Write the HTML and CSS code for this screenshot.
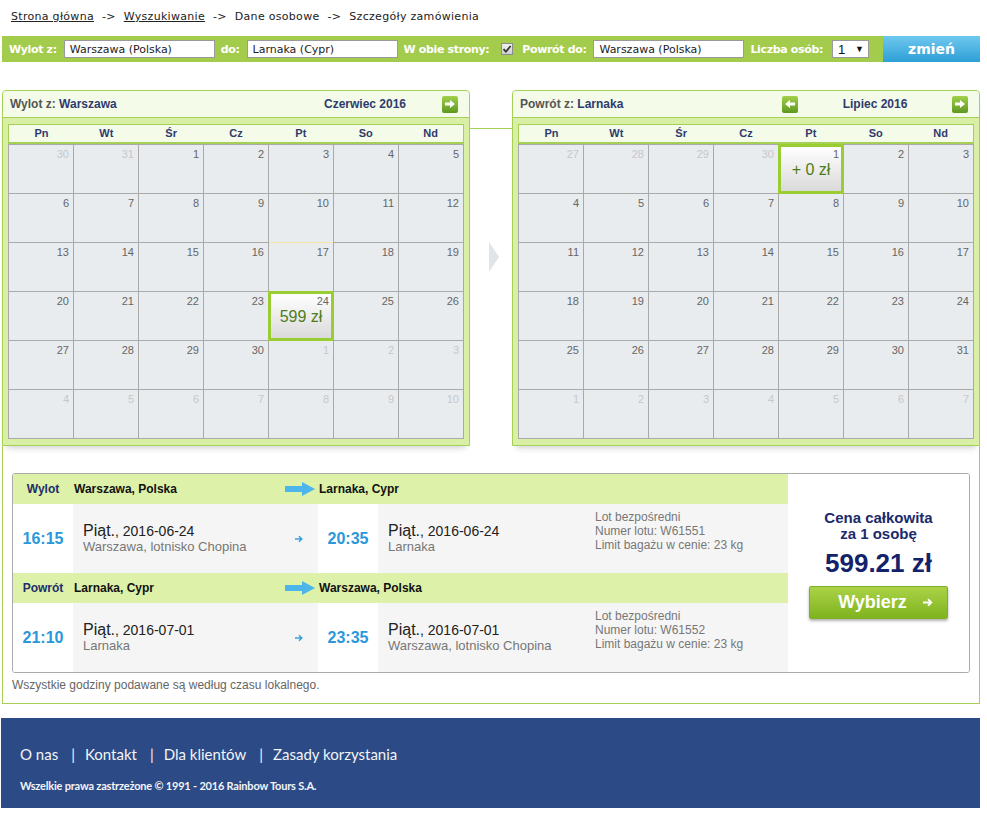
FILE: index.html
```html
<!DOCTYPE html>
<html lang="pl">
<head>
    <meta charset="UTF-8">
    <meta name="viewport" content="width=device-width, initial-scale=1.0">
    <title>Szczegóły zamówienia</title>
    <link rel="stylesheet" href="styles.css">
</head>
<body>
<div class="page">

    <div class="crumbs">
        <a href="#">Strona główna</a><span class="arr">-&gt;</span><a href="#">Wyszukiwanie</a><span class="arr">-&gt;</span>Dane osobowe<span class="arr">-&gt;</span>Szczegóły zamówienia
    </div>

    <form class="search" onsubmit="return false">
        <label>Wylot z:</label>
        <input type="text" value="Warszawa (Polska)">
        <label>do:</label>
        <input type="text" value="Larnaka (Cypr)">
        <label>W obie strony:</label>
        <span class="tick"><svg width="10" height="10" viewBox="0 0 10 10"><path d="M1.5 5.2l2.4 2.5L8.6 2" fill="none" stroke="#333" stroke-width="1.8"/></svg></span>
        <label>Powrót do:</label>
        <input type="text" value="Warszawa (Polska)">
        <label>Liczba osób:</label>
        <div class="count"><span>1</span><span class="caret">&#9660;</span></div>
        <button class="change">zmień</button>
    </form>

    <div class="calendars">
        <div class="cal">
            <div class="cal-head">
                <div class="cal-title">Wylot z: <span>Warszawa</span></div>
                <div class="nav">
                    <span class="btn-arr off"></span>
                    <span class="month">Czerwiec 2016</span>
                    <span class="btn-arr"><svg width="10" height="8" viewBox="0 0 10 8"><path d="M0 2.6h5V0l5 4-5 4V5.4H0z" fill="#fff"/></svg></span>
                </div>
            </div>
            <div class="cal-body">
                <div class="cal-days"><span>Pn</span><span>Wt</span><span>Śr</span><span>Cz</span><span>Pt</span><span>So</span><span>Nd</span></div>
                <div class="cal-grid" id="june"></div>
            </div>
        </div>

        <div class="cal-link">
            <div class="line"></div>
            <span class="tri"></span>
        </div>

        <div class="cal">
            <div class="cal-head">
                <div class="cal-title">Powrót z: <span>Larnaka</span></div>
                <div class="nav">
                    <span class="btn-arr"><svg width="10" height="8" viewBox="0 0 10 8"><path d="M10 2.6H5V0L0 4l5 4V5.4h5z" fill="#fff"/></svg></span>
                    <span class="month">Lipiec 2016</span>
                    <span class="btn-arr"><svg width="10" height="8" viewBox="0 0 10 8"><path d="M0 2.6h5V0l5 4-5 4V5.4H0z" fill="#fff"/></svg></span>
                </div>
            </div>
            <div class="cal-body">
                <div class="cal-days"><span>Pn</span><span>Wt</span><span>Śr</span><span>Cz</span><span>Pt</span><span>So</span><span>Nd</span></div>
                <div class="cal-grid" id="july"></div>
            </div>
        </div>
    </div>

    <div class="results">
        <div class="offer">
            <div class="legs">
                <div class="leg-head">
                    <span class="label">Wylot</span>
                    <span class="from">Warszawa, Polska
                        <svg width="30" height="14" viewBox="0 0 30 14"><path d="M0 4h17V0l13 7-13 7v-4H0z" fill="#4cb5ea"/></svg>
                    </span>
                    <span class="to">Larnaka, Cypr</span>
                </div>
                <div class="leg-row">
                    <div class="time">16:15</div>
                    <div class="stop dep">
                        <div>
                            <div class="when"><b>Piąt.</b>, 2016-06-24</div>
                            <div class="place">Warszawa, lotnisko Chopina</div>
                        </div>
                        <svg width="8" height="8" viewBox="0 0 8 8"><path d="M0 4h6.6M4 1.2L6.8 4 4 6.8" fill="none" stroke="#3aa0dd" stroke-width="1.5"/></svg>
                    </div>
                    <div class="time">20:35</div>
                    <div class="stop ret">
                        <div class="where">
                            <div class="when"><b>Piąt.</b>, 2016-06-24</div>
                            <div class="place">Larnaka</div>
                        </div>
                        <div class="info">Lot bezpośredni<br>Numer lotu: W61551<br>Limit bagażu w cenie: 23 kg</div>
                    </div>
                </div>

                <div class="leg-head">
                    <span class="label">Powrót</span>
                    <span class="from">Larnaka, Cypr
                        <svg width="30" height="14" viewBox="0 0 30 14"><path d="M0 4h17V0l13 7-13 7v-4H0z" fill="#4cb5ea"/></svg>
                    </span>
                    <span class="to">Warszawa, Polska</span>
                </div>
                <div class="leg-row">
                    <div class="time">21:10</div>
                    <div class="stop dep">
                        <div>
                            <div class="when"><b>Piąt.</b>, 2016-07-01</div>
                            <div class="place">Larnaka</div>
                        </div>
                        <svg width="8" height="8" viewBox="0 0 8 8"><path d="M0 4h6.6M4 1.2L6.8 4 4 6.8" fill="none" stroke="#3aa0dd" stroke-width="1.5"/></svg>
                    </div>
                    <div class="time">23:35</div>
                    <div class="stop ret">
                        <div class="where">
                            <div class="when"><b>Piąt.</b>, 2016-07-01</div>
                            <div class="place">Warszawa, lotnisko Chopina</div>
                        </div>
                        <div class="info">Lot bezpośredni<br>Numer lotu: W61552<br>Limit bagażu w cenie: 23 kg</div>
                    </div>
                </div>
            </div>

            <div class="price">
                <div class="total">Cena całkowita<br>za 1 osobę</div>
                <div class="amount">599.21 zł</div>
                <a href="#" class="choose">Wybierz
                    <svg width="10" height="9" viewBox="0 0 10 9"><path d="M0 4.5h8M5 1.2l3.3 3.3L5 7.8" fill="none" stroke="#fff" stroke-width="1.8"/></svg>
                </a>
            </div>
        </div>
        <p class="note">Wszystkie godziny podawane są według czasu lokalnego.</p>
    </div>

    <div class="footer">
        <div class="foot-links">
            <a href="#">O nas</a><span class="bar">|</span><a href="#">Kontakt</a><span class="bar">|</span><a href="#">Dla klientów</a><span class="bar">|</span><a href="#">Zasady korzystania</a>
        </div>
        <div class="copy">Wszelkie prawa zastrzeżone © 1991 - 2016 Rainbow Tours S.A.</div>
    </div>

</div>

<script>
    // rysuje siatke miesiaca: 6 tygodni po 7 dni
    function buildMonth(id, first, days, prevDays, prices, marked){
        var grid = document.getElementById(id);
        var html = "";

        for(var i = 0; i < 42; i++){
            var d = i - first + 1;
            var cls = "day";
            var num = d;

            if(d < 1){
                num = prevDays + d;
                cls += " out";
            }else if(d > days){
                num = d - days;
                cls += " out";
            }else{
                if(prices[d]) cls += " sel";
                if(d === marked) cls += " mark";
            }

            html += '<div class="' + cls + '"><span class="num">' + num + '</span>';
            if(d >= 1 && d <= days && prices[d]){
                html += '<span class="cost">' + prices[d] + '</span>';
            }
            html += '</div>';
        }
        grid.innerHTML = html;
    }

    buildMonth("june", 2, 30, 31, {24: "599 zł"}, 17);
    buildMonth("july", 4, 31, 30, {1: "+ 0 zł"}, null);
</script>
</body>
</html>
```

FILE: styles.css
```css
* {
    margin: 0;
    padding: 0;
    box-sizing: border-box;
}
body {
    font-family: "Liberation Sans", Arial, sans-serif;
    color: #222;
    background: #fff;
}
a {
    color: inherit;
}
.page {
    width: 978px;
    margin-left: 2px;
}

/* okruszki */
.crumbs {
    height: 36px;
    padding: 10px 9px 0;
    font: 11px/13px "DejaVu Sans", Verdana, sans-serif;
    letter-spacing: 0.3px;
    color: #222;
}
.crumbs .arr {
    margin: 0 8px;
}

/* pasek wyszukiwania */
.search {
    display: flex;
    align-items: center;
    height: 26px;
    padding-left: 7px;
    background: #a4cc4c;
    color: #fff;
    font: bold 11px "DejaVu Sans", Verdana, sans-serif;
    white-space: nowrap;
}
.search > * {
    flex-shrink: 0;
}
.search label {
    margin-right: 7px;
    letter-spacing: -0.35px;
}
.search input[type=text] {
    width: 151px;
    height: 18px;
    margin-right: 6px;
    padding: 0 5px;
    border: 1px solid #9a9a9a;
    font: 11px "DejaVu Sans", Verdana, sans-serif;
    color: #222;
}
.tick {
    display: flex;
    align-items: center;
    justify-content: center;
    width: 12px;
    height: 12px;
    margin: 0 9px 0 5px;
    border: 1px solid #8c8c8c;
    background: linear-gradient(#f0f0f0, #cfcfcf);
}
.count {
    display: flex;
    align-items: center;
    justify-content: space-between;
    width: 37px;
    height: 18px;
    margin-left: 2px;
    padding: 0 4px 0 5px;
    background: #fff;
    border: 1px solid #9a9a9a;
    color: #111;
    font: 13px "Liberation Sans", Arial, sans-serif;
}
.count .caret {
    font-size: 9px;
}
.change {
    margin-left: auto;
    width: 97px;
    height: 26px;
    border: 0;
    background: linear-gradient(#6fc8ee, #2e9fd7);
    color: #fff;
    font: bold 14px "DejaVu Sans", Verdana, sans-serif;
    cursor: pointer;
}

/* kalendarze */
.calendars {
    display: flex;
    margin-top: 28px;
}
.cal {
    width: 468px;
    border: 1px solid #a6cf55;
    border-radius: 4px 4px 0 0;
    background: #daefa6;
    box-shadow: 0 6px 6px -4px rgba(0,0,0,0.18);
}
.cal-head {
    display: flex;
    align-items: center;
    justify-content: space-between;
    height: 27px;
    padding: 0 11px 0 7px;
    background: #f4fbe8;
    border-bottom: 1px solid #a6cf55;
    border-radius: 3px 3px 0 0;
    font-size: 12px;
    font-weight: bold;
}
.cal-title {
    color: #555;
}
.cal-title span,
.nav .month {
    color: #2f3a6e;
}
.nav {
    display: flex;
    align-items: center;
    width: 186px;
}
.nav .month {
    flex: 1;
    text-align: center;
}
.btn-arr {
    display: flex;
    align-items: center;
    justify-content: center;
    width: 16px;
    height: 17px;
    border-radius: 2px;
    background: linear-gradient(#a2d04a, #5e9820);
    cursor: pointer;
}
.btn-arr.off {
    visibility: hidden;
}
.cal-body {
    padding: 6px 5px 6px;
}
.cal-days {
    display: grid;
    grid-template-columns: repeat(7, 1fr);
    height: 20px;
    border: 1px solid #a6cf55;
    border-bottom-width: 2px;
    background: #f4fbe8;
    color: #2f3a6e;
    font-size: 11px;
    font-weight: bold;
    line-height: 17px;
    text-align: center;
}
.cal-grid {
    display: grid;
    grid-template-columns: repeat(7, 64px);
    grid-auto-rows: 48px;
    gap: 1px;
    background: #a9a9a9;
    border: 1px solid #a9a9a9;
}
.day {
    padding: 3px 4px 0;
    background: #e9ecef;
    color: #666;
    font-size: 11px;
    line-height: 13px;
    text-align: right;
}
.day .num {
    display: block;
}
.day.out {
    color: #c5c8cc;
}
.day.mark {
    box-shadow: 0 -1px 0 #f3e6a2;
}
.day.sel {
    position: relative;
    margin: -1px;
    padding: 1px 2px 0;
    border: 3px solid #9acd32;
    background: linear-gradient(#fff, #dadada);
    cursor: pointer;
}
.day .cost {
    display: block;
    margin-top: 0;
    color: #4d7d1c;
    font-size: 16px;
    line-height: 18px;
    text-align: center;
}
.cal-link {
    flex: 0 0 42px;
    padding-top: 38px;
}
.cal-link .line {
    border-top: 1px solid #a6cf55;
}
.cal-link .tri {
    display: block;
    width: 0;
    margin: 113px 0 0 19px;
    border-left: 10px solid #e1e4e8;
    border-top: 15px solid transparent;
    border-bottom: 15px solid transparent;
}

/* wynik */
.results {
    padding: 27px 9px 11px;
    border: 1px solid #a6cf55;
    border-top: 0;
}
.offer {
    display: flex;
    height: 200px;
    border: 1px solid #aaa;
    border-radius: 3px;
    overflow: hidden;
}
.legs {
    width: 775px;
}
.leg-head {
    display: flex;
    align-items: center;
    height: 30px;
    background: #ddf1a8;
    color: #111;
    font-size: 12px;
    font-weight: bold;
}
.leg-head .label {
    width: 60px;
    color: #1f2d6b;
    text-align: center;
}
.leg-head .from {
    display: flex;
    align-items: center;
    justify-content: space-between;
    width: 245px;
    padding: 0 3px 0 1px;
}
.leg-head .to {
    padding-left: 1px;
}
.leg-row {
    display: flex;
    height: 69px;
}
.leg-row .time {
    display: flex;
    align-items: center;
    justify-content: center;
    width: 60px;
    background: #fff;
    color: #2a98da;
    font-size: 16px;
    font-weight: bold;
}
.stop {
    display: flex;
    align-items: center;
    padding: 0 10px;
    background: #f5f5f5;
}
.stop.dep {
    width: 245px;
    justify-content: space-between;
    padding-right: 15px;
}
.stop.ret {
    flex: 1;
}
.stop .where {
    width: 207px;
}
.when {
    color: #222;
    font-size: 14px;
    line-height: 16px;
}
.when b {
    font-size: 16px;
    font-weight: normal;
}
.place {
    color: #777;
    font-size: 13px;
    line-height: 15px;
}
.info {
    align-self: flex-start;
    margin-top: 6px;
    color: #777;
    font-size: 12px;
    line-height: 14px;
}
.price {
    flex: 1;
    display: flex;
    flex-direction: column;
    align-items: center;
    padding-top: 36px;
    background: #fff;
}
.total {
    color: #1a2a6c;
    font-size: 15px;
    font-weight: bold;
    line-height: 16px;
    text-align: center;
}
.amount {
    margin-top: 6px;
    color: #13236b;
    font-size: 26px;
    font-weight: bold;
    line-height: 30px;
}
.choose {
    display: flex;
    align-items: center;
    justify-content: center;
    gap: 16px;
    width: 139px;
    height: 33px;
    margin-top: 8px;
    padding-left: 14px;
    border: 1px solid #80ad2a;
    border-radius: 2px;
    background: linear-gradient(#abd247, #7fb31f);
    box-shadow: 0 2px 3px rgba(0,0,0,0.3);
    color: #fff;
    font-size: 18px;
    font-weight: bold;
    text-decoration: none;
}
.note {
    margin-top: 5px;
    color: #666;
    font-size: 12px;
    line-height: 14px;
}

/* stopka */
.footer {
    height: 90px;
    margin: 14px 0 0 -1px;
    padding: 26px 19px 0;
    background: #2c4a85;
    color: #f2f4f8;
    font-family: Lato, "Liberation Sans", sans-serif;
}
.foot-links {
    font-size: 15px;
    line-height: 20px;
}
.foot-links a {
    text-decoration: none;
}
.foot-links .bar {
    margin: 0 10px 0 13px;
}
.copy {
    margin-top: 15px;
    font-size: 11px;
    font-weight: bold;
    line-height: 13px;
    letter-spacing: -0.2px;
}
```
